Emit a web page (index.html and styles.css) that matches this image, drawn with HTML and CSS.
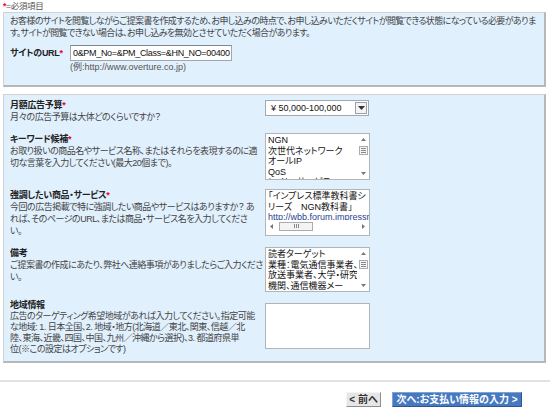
FILE: index.html
```html
<!DOCTYPE html>
<html lang="ja">
<head>
<meta charset="utf-8">
<title>サイト情報の入力</title>
<link rel="stylesheet" href="styles.css">
</head>
<body>
<div class="page">
  <p class="legend"><span class="req">*</span>=必須項目</p>

  <section class="box box-site">
    <p class="intro">お客様のサイトを閲覧しながらご提案書を作成するため、お申し込みの時点で、お申し込みいただくサイトが閲覧できる状態になっている必要がありま<br>す。サイトが閲覧できない場合は、お申し込みを無効とさせていただく場合があります。</p>
    <div class="url-row">
      <span class="label url-label">サイトのURL<span class="req">*</span></span>
      <div class="url-field">
        <div class="input">0&amp;PM_No=&amp;PM_Class=&amp;HN_NO=00400</div>
        <div class="example">(例:http://www.overture.co.jp)</div>
      </div>
    </div>
  </section>

  <section class="box box-form">
    <div class="row row-budget">
      <div class="desc">
        <div class="label">月額広告予算<span class="req">*</span></div>
        <div class="text">月々の広告予算は大体どのくらいですか？</div>
      </div>
      <div class="select">
        <span class="select-value">¥ 50,000-100,000</span>
        <span class="select-btn"><svg width="7" height="4" viewBox="0 0 7 4"><polygon points="0,0 7,0 3.5,4" fill="#333"/></svg></span>
      </div>
    </div>

    <div class="row row-keyword">
      <div class="desc">
        <div class="label">キーワード候補<span class="req">*</span></div>
        <div class="text">お取り扱いの商品名やサービス名称、またはそれらを表現するのに適<br>切な言葉を入力してください(最大20個まで)。</div>
      </div>
      <div class="field field-list">
        <div class="field-text">NGN<br>次世代ネットワーク<br>オールIP<br>QoS<br>レイヤ2サービス</div>
        <div class="vscroll">
          <svg class="arrow" width="5" height="3" viewBox="0 0 5 3"><polygon points="0,3 5,3 2.5,0" fill="#777"/></svg>
          <span class="vthumb"><i></i><i></i><i></i></span>
          <span class="vspace"></span>
          <svg class="arrow" width="5" height="3" viewBox="0 0 5 3"><polygon points="0,0 5,0 2.5,3" fill="#777"/></svg>
        </div>
      </div>
    </div>

    <div class="row row-product">
      <div class="desc">
        <div class="label">強調したい商品・サービス<span class="req">*</span></div>
        <div class="text">今回の広告掲載で特に強調したい商品やサービスはありますか？ あ<br>れば、そのページのURL、または商品・サービス名を入力してくださ<br>い。</div>
      </div>
      <div class="field field-h">
        <div class="field-text">「インプレス標準教科書シ<br>リーズ　NGN教科書」<br><span class="url">http://wbb.forum.impressrd.jp/</span></div>
        <div class="hscroll">
          <svg class="arrow" width="3" height="5" viewBox="0 0 3 5"><polygon points="3,0 3,5 0,2.5" fill="#777"/></svg>
          <span class="hthumb"><i></i><i></i><i></i></span>
          <span class="hspace"></span>
          <svg class="arrow" width="3" height="5" viewBox="0 0 3 5"><polygon points="0,0 0,5 3,2.5" fill="#777"/></svg>
        </div>
      </div>
    </div>

    <div class="row row-note">
      <div class="desc">
        <div class="label">備考</div>
        <div class="text">ご提案書の作成にあたり、弊社へ連絡事項がありましたらご入力くださ<br>い。</div>
      </div>
      <div class="field field-list field-note">
        <div class="field-text">読者ターゲット<br>業種：電気通信事業者、<br>放送事業者、大学・研究<br>機関、通信機器メー<br>カー、IT関連企業</div>
        <div class="vscroll">
          <svg class="arrow" width="5" height="3" viewBox="0 0 5 3"><polygon points="0,3 5,3 2.5,0" fill="#777"/></svg>
          <span class="vthumb"><i></i><i></i><i></i></span>
          <span class="vspace"></span>
          <svg class="arrow" width="5" height="3" viewBox="0 0 5 3"><polygon points="0,0 5,0 2.5,3" fill="#777"/></svg>
        </div>
      </div>
    </div>

    <div class="row row-area">
      <div class="desc">
        <div class="label">地域情報</div>
        <div class="text">広告のターゲティング希望地域があれば入力してください。指定可能<br>な地域: 1. 日本全国、2. 地域・地方(北海道／東北、関東、信越／北<br>陸、東海、近畿、四国、中国、九州／沖縄から選択)、3. 都道府県単<br>位(※この設定はオプションです)</div>
      </div>
      <div class="field field-empty"></div>
    </div>
  </section>
</div>

<hr class="sep">

<div class="actions">
  <button class="btn btn-prev" type="button">&lt; 前へ</button>
  <button class="btn btn-next" type="button">次へ:お支払い情報の入力 &gt;</button>
</div>
</body>
</html>
```

FILE: styles.css
```css
* { box-sizing: border-box; }

html, body {
  margin: 0;
  padding: 0;
  background: #fff;
}

body {
  font-family: "Liberation Sans", "Noto Sans CJK JP", sans-serif;
  font-size: 9px;
  line-height: 12px;
  letter-spacing: -0.3px;
  color: #444;
  font-feature-settings: "palt";
}

.page {
  padding: 1px 4px 0 3px;
}

.legend {
  margin: 0 0 1px;
  font-size: 8.5px;
  line-height: 10px;
  color: #555;
}

.req {
  color: #e4002b;
  font-weight: bold;
}

.box {
  background: #e1f0fd;
  border-top: 1px solid #cfd3d6;
  border-left: 1px solid #cfd3d6;
  border-right: 2px solid #b5b8bb;
  border-bottom: 2px solid #b5b8bb;
}

.box-site {
  padding: 2px 6px 12px 6px;
}

.intro {
  margin: 0;
  white-space: nowrap;
  letter-spacing: -0.62px;
}

.url-row {
  display: flex;
  align-items: flex-start;
  gap: 2px;
  margin-top: 6px;
}

.label {
  font-weight: bold;
  color: #222;
}

.url-label {
  margin-top: 2px;
  width: 58px;
  white-space: nowrap;
}

.input {
  width: 162px;
  height: 16px;
  background: #fff;
  border: 1px solid #9ea6ae;
  border-top-color: #7f8790;
  padding: 0 2px;
  font-size: 9px;
  letter-spacing: -0.32px;
  line-height: 14px;
  color: #111;
  white-space: nowrap;
  overflow: hidden;
}

.example {
  color: #555;
  letter-spacing: 0;
}

.box-form {
  margin-top: 7px;
  padding: 4px 6px 6px 6px;
}

.row {
  display: grid;
  grid-template-columns: 250px 105px;
  column-gap: 5px;
  align-items: start;
}

.row-keyword { margin-top: 10px; }
.row-product { margin-top: 9px; }
.row-note { margin-top: 10px; }
.row-area { margin-top: 8px; }

.text {
  white-space: nowrap;
  letter-spacing: -0.5px;
}

.row-area .desc {
  line-height: 11px;
}

.select {
  display: flex;
  align-items: center;
  width: 104px;
  height: 16px;
  margin-top: 1px;
  background: #fff;
  border: 1px solid #a4a9ae;
  padding: 0 1px 0 5px;
}

.select-value {
  flex: 1;
  font-size: 9px;
  letter-spacing: 0;
  color: #111;
}

.select-btn {
  display: flex;
  align-items: center;
  justify-content: center;
  width: 12px;
  height: 12px;
  border: 1px solid #9ba2a9;
  background: #f3f3f3;
}

.field {
  background: #fff;
  border: 1px solid #b0b5ba;
  overflow: hidden;
  display: flex;
}

.field-text {
  flex: 1;
  min-width: 0;
  padding: 1px 2px 0 2px;
  font-size: 9px;
  line-height: 10.5px;
  letter-spacing: 0;
  color: #111;
  overflow: hidden;
  white-space: nowrap;
}

.field-list {
  height: 47px;
}

.field-note {
  height: 45px;
}

.field-h {
  height: 47px;
  flex-direction: column;
}

.url {
  color: #2a3f8f;
}

.field-empty {
  height: 46px;
  margin-top: 3px;
}

.vscroll {
  flex: none;
  width: 12px;
  display: flex;
  flex-direction: column;
  align-items: center;
  padding: 4px 0 4px;
}

.vthumb {
  margin-top: 5px;
  width: 9px;
  height: 9px;
  border: 1px solid #a8adb2;
  background: #f4f4f4;
  display: flex;
  flex-direction: column;
  align-items: center;
  justify-content: center;
  gap: 1px;
}

.vthumb i {
  display: block;
  width: 5px;
  height: 1px;
  background: #888;
}

.vspace {
  flex: 1;
}

.hscroll {
  flex: none;
  height: 12px;
  display: flex;
  align-items: center;
  padding: 0 4px 0 4px;
  margin-bottom: 3px;
}

.hthumb {
  margin-left: 6px;
  width: 34px;
  height: 9px;
  border: 1px solid #a8adb2;
  background: #f4f4f4;
  display: flex;
  align-items: center;
  justify-content: center;
  gap: 1px;
}

.hthumb i {
  display: block;
  width: 1px;
  height: 4px;
  background: #888;
}

.hspace {
  flex: 1;
}

.sep {
  margin: 17px 0 0;
  border: 0;
  border-top: 2px solid #e2e2e2;
  height: 0;
}

.actions {
  display: flex;
  justify-content: flex-end;
  gap: 11px;
  padding: 10px 28px 0 0;
}

.btn {
  font-family: "Liberation Sans", "Noto Sans CJK JP", sans-serif;
  font-size: 10px;
  line-height: 12px;
  font-weight: bold;
  height: 15px;
  padding: 0;
  margin: 0;
  cursor: pointer;
  letter-spacing: 0;
  white-space: nowrap;
  text-align: center;
  font-feature-settings: "palt";
}

.btn-prev {
  width: 35px;
  background: #e6e6e6;
  color: #333;
  border: 1px solid;
  border-color: #f4f4f4 #8e8e8e #8e8e8e #f4f4f4;
}

.btn-next {
  width: 130px;
  background: #4679c0;
  color: #fff;
  border: 1px solid;
  border-color: #7fa3d6 #2d5595 #2d5595 #7fa3d6;
}
```
